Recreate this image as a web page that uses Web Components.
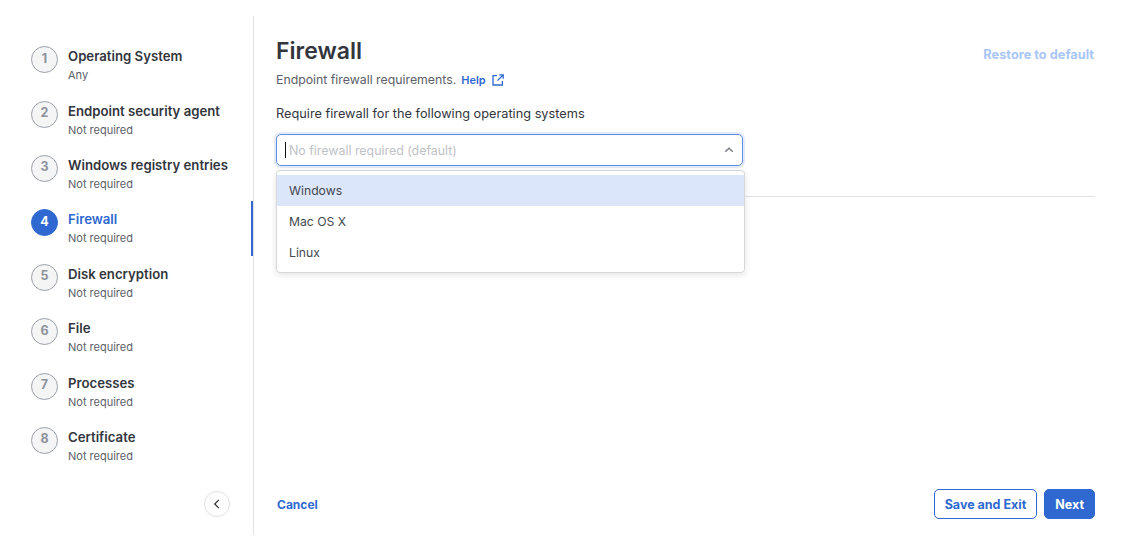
<!DOCTYPE html>
<html>
<head>
<meta charset="utf-8">
<title>Firewall</title>
<style>
    html, body { margin: 0; padding: 0; background: #fff; }
    body { font-family: "Inter", "Liberation Sans", sans-serif; color: #2c2f36; }
</style>
</head>
<body>
<wizard-page>
    <step-list slot="side">
        <step-item num="1" title="Operating System" sub="Any"></step-item>
        <step-item num="2" title="Endpoint security agent" sub="Not required"></step-item>
        <step-item num="3" title="Windows registry entries" sub="Not required"></step-item>
        <step-item num="4" title="Firewall" sub="Not required" active></step-item>
        <step-item num="5" title="Disk encryption" sub="Not required"></step-item>
        <step-item num="6" title="File" sub="Not required"></step-item>
        <step-item num="7" title="Processes" sub="Not required"></step-item>
        <step-item num="8" title="Certificate" sub="Not required"></step-item>
    </step-list>
    <firewall-form slot="main"></firewall-form>
</wizard-page>

<script>
class WizardPage extends HTMLElement {
    constructor() {
        super();
        this.attachShadow({ mode: "open" });
        this.shadowRoot.innerHTML = `
            <style>
                :host { display: flex; box-sizing: border-box; height: 546px; padding: 16px 0 11px; }
                #side { width: 254px; flex: none; box-sizing: border-box; border-right: 1px solid #e1e2e5; }
                #main { flex: 1; min-width: 0; padding: 0 32px 0 22px; display: flex; }
            </style>
            <div id="side"><slot name="side"></slot></div>
            <div id="main"><slot name="main"></slot></div>
        `;
    }
}

class StepList extends HTMLElement {
    constructor() {
        super();
        this.attachShadow({ mode: "open" });
        this.shadowRoot.innerHTML = `
            <style>
                :host { display: flex; flex-direction: column; height: 100%; box-sizing: border-box; padding-top: 16.2px; }
                #steps { display: flex; flex-direction: column; flex: 1; }
                #foot { display: flex; justify-content: flex-end; padding: 0 23px 18px 0; }
                #collapse {
                    width: 26px; height: 26px; box-sizing: border-box; border: 1px solid #e1e2e5;
                    border-radius: 50%; background: #fff; padding: 0;
                    display: flex; align-items: center; justify-content: center;
                }
            </style>
            <div id="steps"><slot></slot></div>
            <div id="foot">
                <button id="collapse">
                    <svg width="12" height="12" viewBox="0 0 12 12" fill="none" stroke="#2c2f36" stroke-width="1.2"><path d="M7.8 1.8 3.7 6l4.1 4.2"/></svg>
                </button>
            </div>
        `;
    }
}

class StepItem extends HTMLElement {
    constructor() {
        super();
        this.attachShadow({ mode: "open" });
    }
    connectedCallback() {
        this.shadowRoot.innerHTML = `
            <style>
                :host { display: flex; height: 54.4px; box-sizing: border-box; padding: 14px 0 0 31px; position: relative; }
                #num {
                    width: 27px; height: 27px; box-sizing: border-box; flex: none; border-radius: 50%;
                    border: 1px solid #9a9fa8; background: #f5f5f6; color: #8d929b;
                    font-size: 12.5px; font-weight: 700; padding-bottom: 3px;
                    display: flex; align-items: center; justify-content: center;
                }
                #text { margin-left: 10px; margin-top: 1px; }
                #title { font-size: 13.2px; font-weight: 600; line-height: 18px; color: #33363d; white-space: nowrap; }
                #sub { font-size: 11px; line-height: 14px; margin-top: 3px; color: #5c6068; white-space: nowrap; }
                :host([active]) #num { background: #2e68d0; border-color: #2e68d0; color: #fff; }
                :host([active]) #title { color: #2e68d0; }
                :host([active])::after {
                    content: ""; position: absolute; right: 0; top: 6px; width: 2px; height: 55px; background: #2e68d0;
                }
            </style>
            <div id="num">${this.getAttribute("num")}</div>
            <div id="text">
                <div id="title">${this.getAttribute("title")}</div>
                <div id="sub">${this.getAttribute("sub")}</div>
            </div>
        `;
    }
}

class FirewallForm extends HTMLElement {
    constructor() {
        super();
        this.attachShadow({ mode: "open" });
        this.shadowRoot.innerHTML = `
            <style>
                :host { display: flex; flex-direction: column; flex: 1; min-width: 0; padding-top: 20px; }
                #head { display: flex; justify-content: space-between; align-items: flex-start; }
                h1 { margin: 0; font-size: 23px; line-height: 30px; font-weight: 600; color: #33363d; }
                #restore { font-size: 12.8px; font-weight: 700; color: #a9c6f8; margin: 11px 1px 0 0; line-height: 16px; }
                #desc { display: flex; align-items: center; font-size: 12.3px; line-height: 16px; color: #5c6068; margin-top: 6px; }
                #help { font-size: 11px; font-weight: 600; color: #2e68d0; margin-left: 5px; }
                #desc svg { margin-left: 6px; }
                #label { font-size: 12.75px; line-height: 16px; font-weight: 400; color: #33363d; margin-top: 18px; }
                #field { position: relative; width: 467px; margin-top: 12px; }
                #divider { border-top: 1px solid #e1e2e5; margin-top: 30px; }
                #foot { margin-top: auto; display: flex; align-items: center; justify-content: space-between; padding-bottom: 16px; }
                #cancel { font-size: 12px; font-weight: 700; color: #2e68d0; margin-left: 1px; }
                #actions { display: flex; gap: 7px; }
            </style>
            <div id="head">
                <h1>Firewall</h1>
                <div id="restore">Restore to default</div>
            </div>
            <div id="desc">
                <span>Endpoint firewall requirements.</span>
                <span id="help">Help</span>
                <svg width="12" height="12" viewBox="0 0 12 12" fill="none" stroke="#2e68d0" stroke-width="1.3"><path d="M5 1.6H1v9.4h9.4V7"/><path d="M7.2 .8h4v4"/><path d="M11 1 5.4 6.6"/></svg>
            </div>
            <div id="label">Require firewall for the following operating systems</div>
            <div id="field">
                <select-box placeholder="No firewall required (default)"></select-box>
                <option-menu>
                    <option-row selected>Windows</option-row>
                    <option-row>Mac OS X</option-row>
                    <option-row>Linux</option-row>
                </option-menu>
            </div>
            <div id="divider"></div>
            <div id="foot">
                <span id="cancel">Cancel</span>
                <div id="actions">
                    <wizard-button>Save and Exit</wizard-button>
                    <wizard-button primary>Next</wizard-button>
                </div>
            </div>
        `;
    }
}

class SelectBox extends HTMLElement {
    constructor() {
        super();
        this.attachShadow({ mode: "open" });
    }
    connectedCallback() {
        this.shadowRoot.innerHTML = `
            <style>
                :host {
                    display: flex; align-items: center; box-sizing: border-box; height: 32px;
                    border: 1px solid #5f8fe0; border-radius: 5px; background: #fff;
                    box-shadow: 0 0 0 2px #e3ebfb; padding: 0 8px;
                }
                #caret { width: 1px; height: 16px; background: #111; margin-right: 3px; flex: none; }
                #ph { flex: 1; font-size: 12.4px; color: #c0c2c7; }
            </style>
            <div id="caret"></div>
            <div id="ph">${this.getAttribute("placeholder")}</div>
            <svg width="10" height="10" viewBox="0 0 10 10" fill="none" stroke="#7a7e86" stroke-width="1.5"><path d="M1.2 6.8 5 3.2l3.8 3.6"/></svg>
        `;
    }
}

class OptionMenu extends HTMLElement {
    constructor() {
        super();
        this.attachShadow({ mode: "open" });
        this.shadowRoot.innerHTML = `
            <style>
                :host {
                    display: flex; flex-direction: column; position: absolute; left: 0; top: 36px;
                    width: 469px; box-sizing: border-box; padding: 4px 0 4px; background: #fff;
                    border: 1px solid #d6d7da; border-radius: 4px;
                    box-shadow: 0 2px 6px rgba(30, 35, 45, .12);
                }
            </style>
            <slot></slot>
        `;
    }
}

class OptionRow extends HTMLElement {
    constructor() {
        super();
        this.attachShadow({ mode: "open" });
        this.shadowRoot.innerHTML = `
            <style>
                :host { display: flex; align-items: center; height: 31px; padding-left: 12px; font-size: 12.2px; color: #45484f; }
                :host([selected]) { background: #dbe6fb; }
            </style>
            <slot></slot>
        `;
    }
}

class WizardButton extends HTMLElement {
    constructor() {
        super();
        this.attachShadow({ mode: "open" });
        this.shadowRoot.innerHTML = `
            <style>
                :host {
                    display: flex; align-items: center; box-sizing: border-box; height: 30px; padding: 0 10px;
                    border: 1px solid #2e68d0; border-radius: 5px; background: #fff;
                    font-size: 12.5px; font-weight: 700; color: #2e68d0;
                }
                :host([primary]) { background: #2e68d0; color: #fff; }
            </style>
            <slot></slot>
        `;
    }
}

customElements.define("wizard-page", WizardPage);
customElements.define("step-list", StepList);
customElements.define("step-item", StepItem);
customElements.define("firewall-form", FirewallForm);
customElements.define("select-box", SelectBox);
customElements.define("option-menu", OptionMenu);
customElements.define("option-row", OptionRow);
customElements.define("wizard-button", WizardButton);
</script>
</body>
</html>
